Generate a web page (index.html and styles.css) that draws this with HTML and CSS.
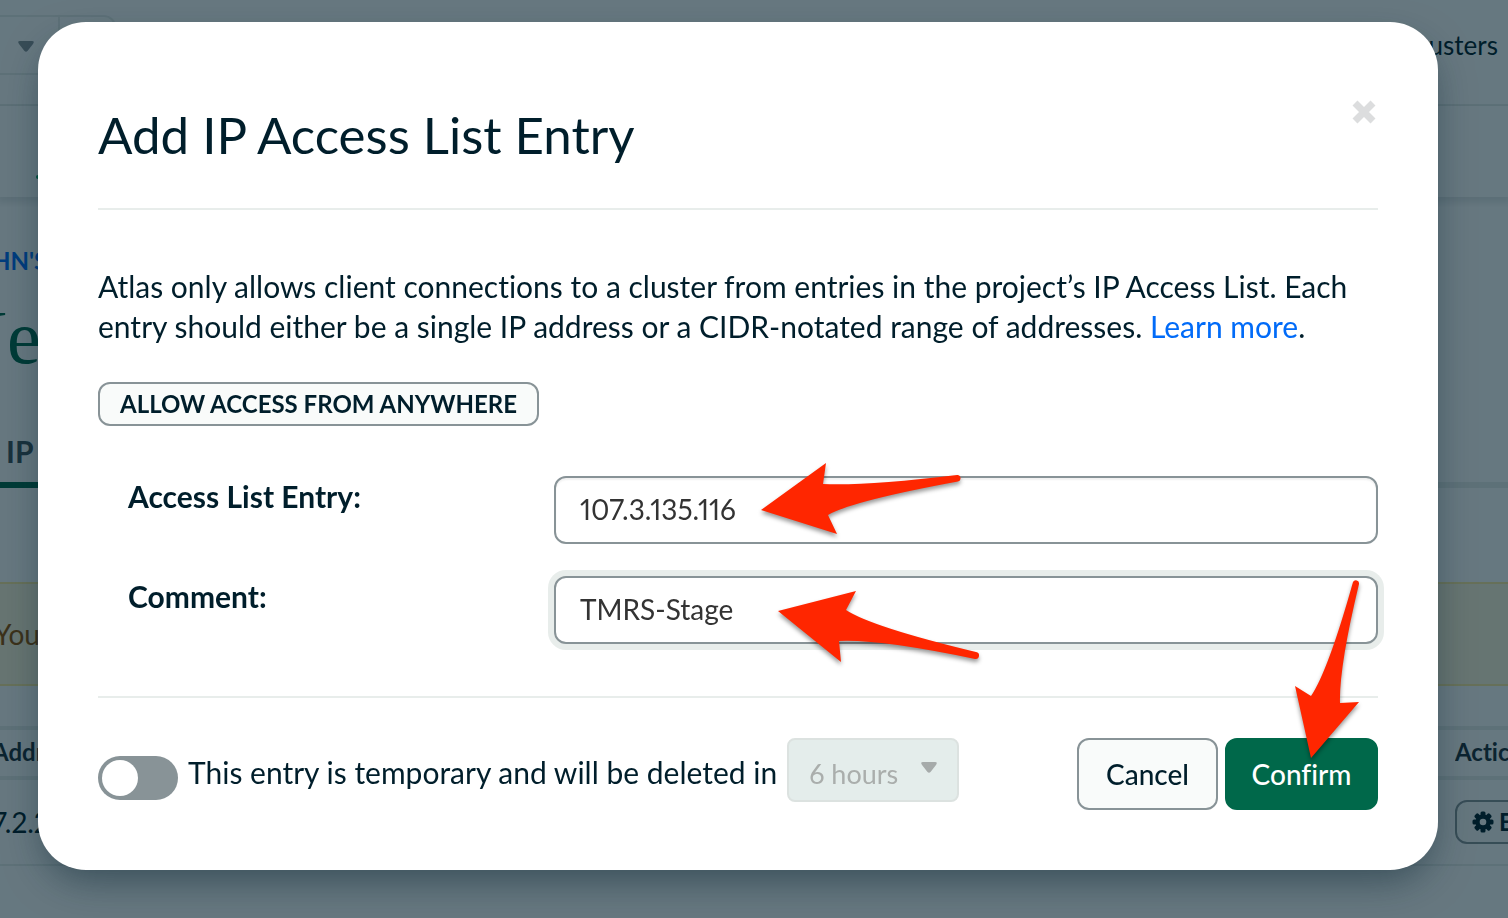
FILE: index.html
```html
<!DOCTYPE html>
<html lang="en">
<head>
<meta charset="utf-8">
<title>Add IP Access List Entry</title>
<link rel="stylesheet" href="styles.css">
</head>
<body>
<div class="page">
  <header class="topbar">
    <div class="org-picker">
      <button class="org-caret" type="button" aria-label="Organization"><svg width="16" height="11" viewBox="0 0 16 11"><path d="M2 0H14Q17 0 15 3L9.500 10Q8 11.500 6.500 10L1 3Q-1 0 2 0Z" fill="#889397"/></svg></button>
      <span class="org-end"></span>
    </div>
    <a class="clusters" href="#">usters</a>
  </header>
  <nav class="subnav"><span class="leaf"></span></nav>
  <main>
    <p class="crumb">HN'S</p>
    <h1 class="page-title">Ne</h1>
    <div class="tabs"><a class="tab" href="#">IP</a></div>
    <div class="banner">You</div>
    <div class="grid-head"><span>Addr</span><span class="col-actions">Actic</span></div>
    <div class="grid-row">
      <span>7.2.2</span>
      <button class="edit" type="button"><svg width="22" height="22" viewBox="-11 -11 22 22"><g fill="#001e2b"><rect x="-2.500" y="-10.500" width="5" height="21" rx="1.500"/><rect x="-2.500" y="-10.500" width="5" height="21" rx="1.500" transform="rotate(45)"/><rect x="-2.500" y="-10.500" width="5" height="21" rx="1.500" transform="rotate(90)"/><rect x="-2.500" y="-10.500" width="5" height="21" rx="1.500" transform="rotate(135)"/><circle r="7.500"/></g><circle r="3.300" fill="#fff"/></svg>E</button>
    </div>
  </main>
</div>

<div class="overlay">
  <section class="modal" role="dialog" aria-labelledby="dialog-title">
    <header class="modal-head">
      <h2 id="dialog-title">Add IP Access List Entry</h2>
      <button class="close" type="button" aria-label="Close"><svg width="24" height="24" viewBox="0 0 24 24"><path d="M3 3L21 21M21 3L3 21" stroke="#dcddde" stroke-width="7"/></svg></button>
    </header>
    <p class="intro">Atlas only allows client connections to a cluster from entries in the project’s IP Access List. Each entry should either be a single IP address or a CIDR-notated range of addresses. <a href="#">Learn more</a>.</p>
    <button class="anywhere" type="button">ALLOW ACCESS FROM ANYWHERE</button>
    <form class="fields">
      <div class="row">
        <label for="entry">Access List Entry:</label>
        <div class="control">
          <input id="entry" type="text" value="107.3.135.116">
          <svg class="arrow arrow-entry" width="210" height="80" viewBox="0 0 210 80"><path d="M7 40L72 -7L69 14Q112 16 203 5A3.300 3.300 0 0 1 204 11.500Q98 31 74 45L83 64Z"/></svg>
        </div>
      </div>
      <div class="row">
        <label for="comment">Comment:</label>
        <div class="control">
          <input id="comment" class="focused" type="text" value="TMRS-Stage">
          <svg class="arrow arrow-comment" width="210" height="80" viewBox="0 0 210 80"><path d="M4 25L82 5L72 24Q98 41 202 66A3.300 3.300 0 0 1 201 73Q105 53 65 55L67 76Z"/></svg>
        </div>
      </div>
    </form>
    <footer class="modal-foot">
      <label class="temporary"><input class="toggle" type="checkbox" role="switch"><span>This entry is temporary and will be deleted in</span></label>
      <div class="duration">
        <select aria-label="Duration" disabled><option>6 hours</option></select>
        <svg class="caret" width="16" height="11" viewBox="0 0 16 11"><path d="M2 0H14Q17 0 15 3L9.500 10Q8 11.500 6.500 10L1 3Q-1 0 2 0Z" fill="#a6abaa"/></svg>
      </div>
      <div class="actions">
        <button class="cancel" type="button">Cancel</button>
        <div class="confirm-wrap">
          <button class="confirm" type="button">Confirm</button>
          <svg class="arrow arrow-confirm" width="80" height="190" viewBox="0 0 80 190"><path d="M22 183L6 111L22 121Q39 96 64 7A3.200 3.200 0 0 1 70 9Q50 92 51 128L70 127Z"/></svg>
        </div>
      </div>
    </footer>
  </section>
</div>
</body>
</html>
```

FILE: styles.css
```css
* { box-sizing: border-box; }

body {
  margin: 0;
  color: #001e2b;
  background: #fff;
  font: 30px/40px Lato, "Noto Sans", sans-serif;
  font-variant-ligatures: none;
  font-variant-numeric: proportional-nums;
}

button, input, select {
  margin: 0;
  font: inherit;
  font-variant-ligatures: none;
  font-variant-numeric: proportional-nums;
  color: inherit;
}
h1, h2, p { margin: 0; font-weight: 400; }
a { color: inherit; text-decoration: none; }
svg { display: block; }

.page { height: 100vh; overflow: hidden; }

.topbar {
  display: flex;
  align-items: flex-start;
  justify-content: space-between;
  height: 106px;
  padding: 15px 10px 0 0;
  border-bottom: 2px solid #e8edeb;
}
.org-picker {
  display: flex;
  width: 116px;
  height: 60px;
  border: 2px solid #e8edeb;
  border-left: 0;
  border-radius: 0 12px 12px 0;
}
.org-caret {
  flex: 1;
  padding: 2px 6px 0 18px;
  border: 0;
  background: none;
}
.org-end { width: 56px; border-left: 2px solid #e8edeb; }
.clusters { padding-top: 10px; font-size: 26px; }
.subnav { height: 91px; padding: 69px 0 0 36px; box-shadow: 0 4px 6px 2px rgba(0, 30, 43, 0.1); }
.leaf { display: block; width: 8px; height: 4px; border-radius: 2px; background: #00a35c; }

.crumb {
  margin: 44px 0 0 -8px;
  color: #016bf8;
  font-size: 24px;
  font-weight: 700;
}
.page-title {
  margin: 18px 0 0 -48px;
  color: #00684a;
  font: 76px/76px "Liberation Serif", serif;
}
.tabs {
  display: flex;
  margin-top: 56px;
  border-bottom: 6px solid #e8edeb;
}
.tab {
  width: 200px;
  margin-bottom: -6px;
  padding: 0 0 11px 6px;
  border-bottom: 6px solid #00684a;
  color: #3d4f58;
  font-weight: 700;
}
.banner {
  height: 104px;
  margin: 94px 0 40px;
  padding: 30px 0;
  border: solid #ffec9e;
  border-width: 2px 0;
  background: #fef7db;
  color: #944f01;
  font-size: 28px;
  text-indent: -6px;
}
.grid-head {
  display: flex;
  justify-content: space-between;
  padding: 2px 0 4px;
  border: solid #e8edeb;
  border-width: 4px 0;
  color: #1c2d38;
  font-size: 24px;
  font-weight: 700;
  text-indent: -8px;
}
.grid-head .col-actions { width: 53px; overflow: hidden; text-indent: 0; }
.grid-row {
  display: flex;
  align-items: center;
  justify-content: space-between;
  height: 86px;
  border-bottom: 2px solid #e8edeb;
  font-size: 28px;
  text-indent: -8px;
}
.edit {
  display: flex;
  align-items: center;
  gap: 5px;
  width: 100px;
  height: 44px;
  margin-right: -47px;
  padding: 0 15px;
  border: 2px solid #889397;
  border-radius: 12px;
  background: #f9fbfa;
  font-size: 24px;
  font-weight: 700;
  text-indent: 0;
}

.overlay {
  position: fixed;
  inset: 0;
  overflow: auto;
  padding: 22px 70px 48px 38px;
  background: rgba(0, 30, 43, 0.6);
}
.modal {
  padding: 60px;
  border-radius: 48px;
  background: #fff;
  box-shadow: 0 16px 40px -8px rgba(0, 30, 43, 0.5);
}
.modal-head {
  display: flex;
  align-items: flex-start;
  justify-content: space-between;
  padding: 24px 2px 44px 0;
  border-bottom: 2px solid #e8edeb;
}
.modal-head h2 { font-size: 51px; line-height: 58px; }
.close {
  margin-top: -6px;
  padding: 0;
  border: 0;
  background: none;
}
.intro { margin: 56px 0 36px; }
.intro a { color: #016bf8; }
.anywhere {
  display: block;
  height: 44px;
  padding: 0 20px;
  border: 2px solid #889397;
  border-radius: 12px;
  background: #f9fbfa;
  font-size: 24px;
  font-weight: 700;
}
.fields {
  display: grid;
  gap: 32px;
  padding: 50px 0 52px;
  border-bottom: 2px solid #e8edeb;
}
.row {
  display: grid;
  grid-template-columns: 426px 1fr;
  align-items: start;
  padding-left: 30px;
}
.row label { font-weight: 700; }
.control, .duration, .confirm-wrap { position: relative; }
.control input {
  display: block;
  width: 100%;
  height: 68px;
  padding: 0 24px 2px;
  border: 2px solid #889397;
  border-radius: 12px;
  outline: 0;
  background: #fff;
  box-shadow: inset 0 2px 2px rgba(0, 0, 0, 0.06);
  color: #333;
  font-size: 28px;
}
.control .focused { box-shadow: 0 0 0 6px #e8edeb; }

.arrow {
  position: absolute;
  z-index: 1;
  overflow: visible;
  fill: #ff2600;
  filter: drop-shadow(0 3px 2px rgba(0, 0, 0, 0.4));
  pointer-events: none;
}
.arrow-entry { left: 200px; top: -6px; }
.arrow-comment { left: 220px; top: 10px; }
.arrow-confirm { right: 9px; top: -163px; }

.modal-foot {
  display: flex;
  align-items: flex-start;
  padding-top: 40px;
}
.temporary { display: flex; gap: 10px; padding-top: 14px; }
.toggle {
  appearance: none;
  flex: none;
  width: 80px;
  height: 44px;
  margin: 4px 0 0;
  padding: 4px;
  border-radius: 22px;
  background: #889397;
}
.toggle::before {
  content: "";
  display: block;
  width: 36px;
  height: 36px;
  border-radius: 50%;
  background: #fff;
}
.duration { margin-left: 10px; }
.duration select {
  appearance: none;
  display: block;
  width: 172px;
  height: 64px;
  padding: 8px 20px 0;
  border: 2px solid #dce2e0;
  border-radius: 8px;
  background: #e4edeb;
  color: #aaaeac;
  font-size: 27px;
  opacity: 1;
}
.caret { position: absolute; top: 24px; right: 22px; }
.actions { display: flex; gap: 7px; margin-left: auto; }
.cancel, .confirm {
  height: 72px;
  padding: 0;
  border: 2px solid #889397;
  border-radius: 12px;
  background: #f9fbfa;
  font-size: 28px;
  font-weight: 500;
}
.cancel { width: 141px; }
.confirm { width: 153px; border-color: #00684a; background: #00684a; color: #fff; }
```
